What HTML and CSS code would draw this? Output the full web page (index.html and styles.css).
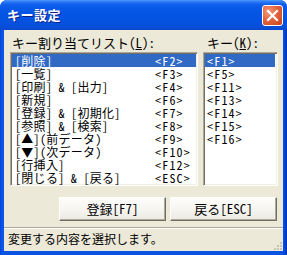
FILE: index.html
```html
<!DOCTYPE html>
<html lang="ja">
<head>
<meta charset="utf-8">
<title>キー設定</title>
<link rel="stylesheet" href="styles.css">
</head>
<body>
<div class="window">
  <div class="titlebar">
    <span class="title">キー設定</span>
    <span class="close">
      <svg width="21" height="21" viewBox="0 0 21 21"><path d="M6 6 L15 15 M15 6 L6 15" stroke="#fff" stroke-width="2.2" stroke-linecap="square" fill="none"/></svg>
    </span>
  </div>
  <div class="frame">
    <div class="client">
      <div class="panes">
        <div class="pane pane-left">
          <div class="label">キー割り当てリスト(<u>L</u>):</div>
          <div class="listbox">
            <div class="row sel"><span class="n">[削除]</span><span class="k">&lt;F2&gt;</span></div>
            <div class="row"><span class="n">[一覧]</span><span class="k">&lt;F3&gt;</span></div>
            <div class="row"><span class="n">[印刷]　&amp;　[出力]</span><span class="k">&lt;F4&gt;</span></div>
            <div class="row"><span class="n">[新規]</span><span class="k">&lt;F6&gt;</span></div>
            <div class="row"><span class="n">[登録]　&amp;　[初期化]</span><span class="k">&lt;F7&gt;</span></div>
            <div class="row"><span class="n">[参照]　&amp;　[検索]</span><span class="k">&lt;F8&gt;</span></div>
            <div class="row"><span class="n">[▲](前データ)</span><span class="k">&lt;F9&gt;</span></div>
            <div class="row"><span class="n">[▼](次データ)</span><span class="k">&lt;F10&gt;</span></div>
            <div class="row"><span class="n">[行挿入]</span><span class="k">&lt;F12&gt;</span></div>
            <div class="row"><span class="n">[閉じる]　&amp;　[戻る]</span><span class="k">&lt;ESC&gt;</span></div>
          </div>
        </div>
        <div class="pane pane-right">
          <div class="label">キー(<u>K</u>):</div>
          <div class="listbox">
            <div class="row sel"><span class="k">&lt;F1&gt;</span></div>
            <div class="row"><span class="k">&lt;F5&gt;</span></div>
            <div class="row"><span class="k">&lt;F11&gt;</span></div>
            <div class="row"><span class="k">&lt;F13&gt;</span></div>
            <div class="row"><span class="k">&lt;F14&gt;</span></div>
            <div class="row"><span class="k">&lt;F15&gt;</span></div>
            <div class="row"><span class="k">&lt;F16&gt;</span></div>
          </div>
        </div>
      </div>
      <div class="buttons">
        <button class="btn">登録[F7]</button>
        <button class="btn">戻る[ESC]</button>
      </div>
      <div class="status">
        <span class="status-text">変更する内容を選択します。</span>
        <svg class="grip" width="12" height="12" viewBox="0 0 12 12">
          <g fill="#C9C5B4">
            <rect x="9" y="3" width="2" height="2"/>
            <rect x="6" y="6" width="2" height="2"/><rect x="9" y="6" width="2" height="2"/>
            <rect x="3" y="9" width="2" height="2"/><rect x="6" y="9" width="2" height="2"/><rect x="9" y="9" width="2" height="2"/>
          </g>
        </svg>
      </div>
    </div>
  </div>
</div>
</body>
</html>
```

FILE: styles.css
```css
* { box-sizing: border-box; }
html, body { margin: 0; padding: 0; background: #ffffff; }
body {
  width: 287px;
  height: 255px;
  overflow: hidden;
  font-family: "Noto Sans CJK JP", sans-serif;
  font-feature-settings: "hwid";
  color: #000;
}
.window {
  width: 287px;
  height: 255px;
  display: flex;
  flex-direction: column;
  border-radius: 7px 7px 0 0;
  overflow: hidden;
  background: #0A4BDB;
}
.titlebar {
  height: 30px;
  flex: none;
  display: flex;
  align-items: center;
  padding: 0 4px 0 7px;
  background: linear-gradient(to bottom, #4F9BFF 0px, #2A76F5 2px, #0D5CEB 5px, #0556E6 12px, #0452E0 22px, #0A4CD6 28px, #0A48CC 30px);
}
.title {
  flex: 1;
  color: #fff;
  font-weight: bold;
  font-size: 13px;
  line-height: 16px;
  letter-spacing: 0.5px;
  text-shadow: 1px 1px #0A1E8A;
}
.close {
  width: 21px;
  height: 21px;
  display: block;
  border: 1px solid #fff;
  border-radius: 3px;
  background: radial-gradient(circle at 30% 30%, #F39A7C 0%, #E2643F 45%, #CB4015 100%);
}
.close svg { display: block; margin: -1px; }
.frame {
  flex: 1;
  display: flex;
  padding: 0 4px 4px 4px;
  background: linear-gradient(to right, #0842CF 0, #0A58EA 2px, #0A53E3 4px, #0A53E3 283px, #0044D8 285px, #0032B4 287px);
}
.client {
  flex: 1;
  display: flex;
  flex-direction: column;
  background: #ECE9D8;
}
.panes {
  display: flex;
  gap: 5px;
  padding: 6px 5px 0 6px;
}
.pane { display: flex; flex-direction: column; }
.pane-left { width: 188px; }
.pane-right { width: 75px; }
.label {
  font-size: 13px;
  line-height: 13px;
  height: 13px;
  margin-bottom: 3px;
  white-space: nowrap;
}
.pane-left .label { padding-left: 2px; }
.pane-right .label { padding-left: 4px; }
.label u { text-decoration: underline; text-underline-offset: 1px; }
.listbox {
  height: 134px;
  background: #fff;
  border: 1px solid;
  border-color: #ACA899 #FFFFFF #FFFFFF #ACA899;
  box-shadow: inset 1px 1px 0 #716F64, inset -1px -1px 0 #F1EFE2;
  padding: 1px;
  overflow: hidden;
}
.row {
  height: 13px;
  line-height: 13px;
  font-size: 12px;
  white-space: nowrap;
  display: grid;
  grid-template-columns: 140px auto;
}
.n { letter-spacing: 0.3px; }
.k { letter-spacing: 1.2px; }
.pane-left .row { padding-left: 3px; }
.pane-right .row { padding-left: 2px; grid-template-columns: auto; margin-right: 1px; }
.row.sel { background: #316AC5; color: #fff; }
.buttons {
  display: flex;
  justify-content: flex-end;
  gap: 4px;
  margin-top: 11px;
  padding-right: 6px;
}
.btn {
  width: 107px;
  height: 24px;
  padding: 0;
  margin: 0;
  font-family: "Noto Sans CJK JP", sans-serif;
  font-feature-settings: "hwid";
  font-size: 13px;
  line-height: 20px;
  color: #000;
  background: linear-gradient(to bottom, #FDFDFC 0%, #F6F5F1 50%, #ECEAE2 100%);
  border: 1px solid;
  border-color: #FFFFFF #716F64 #716F64 #FFFFFF;
  box-shadow: inset -1px -1px 0 #ACA899;
}
.status {
  margin-top: 6px;
  height: 24px;
  display: flex;
  align-items: flex-end;
  border-top: 1px solid #ACA899;
  box-shadow: inset 0 1px 0 #FFFFFF;
  padding-left: 4px;
}
.status-text {
  flex: 1;
  font-size: 12px;
  line-height: 12px;
  margin-bottom: 6px;
  white-space: nowrap;
}
.grip { display: block; flex: none; }
```
